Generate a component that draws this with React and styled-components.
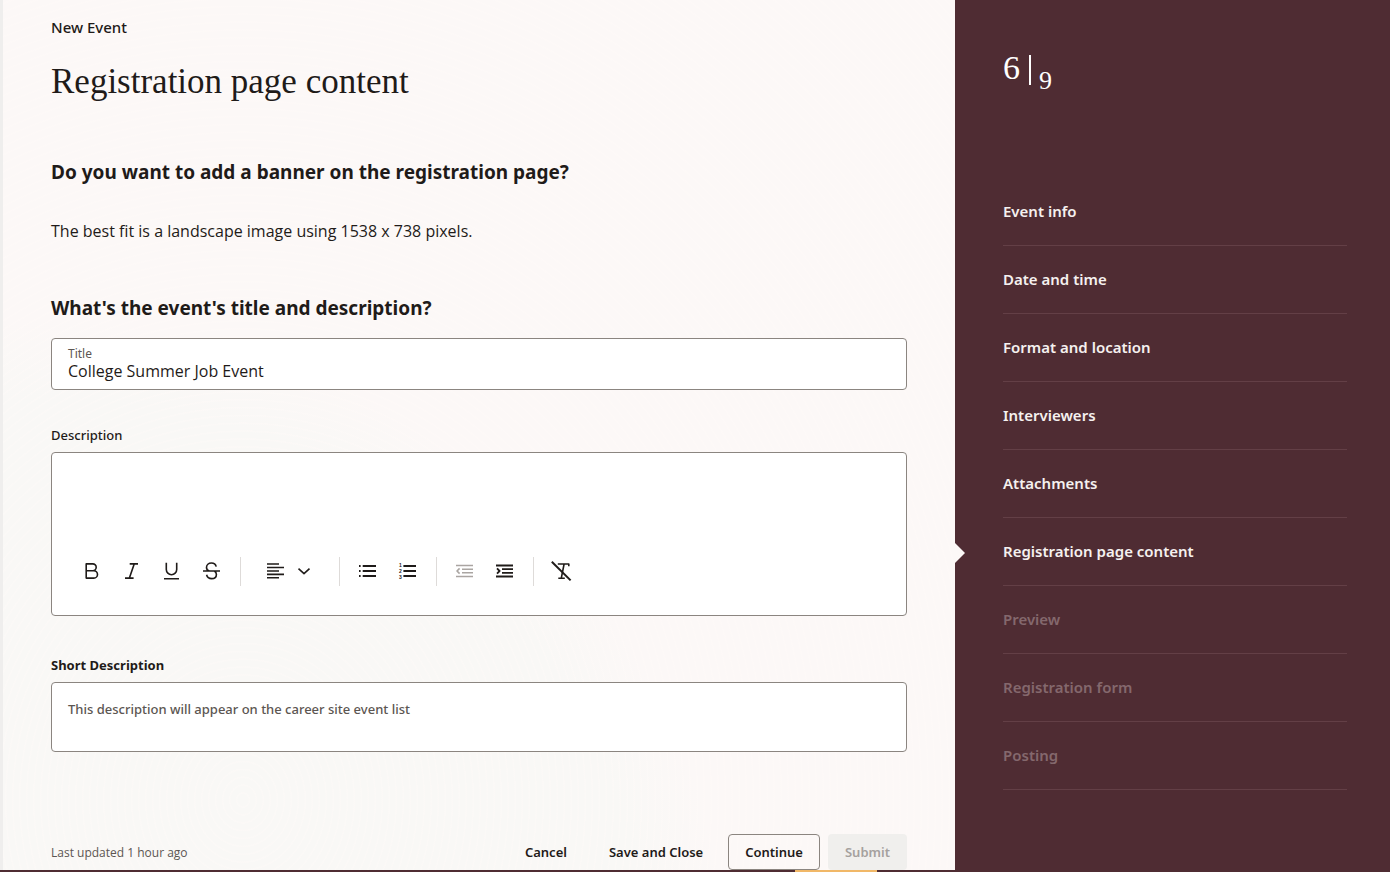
import { useState } from 'react';
import styled, { createGlobalStyle } from 'styled-components';

const steps = [
  'Event info',
  'Date and time',
  'Format and location',
  'Interviewers',
  'Attachments',
  'Registration page content',
  'Preview',
  'Registration form',
  'Posting',
];

const CURRENT = 5;

const App = () => {
  const [title, setTitle] = useState('College Summer Job Event');

  return (
    <>
      <GlobalStyle />
      <Page>
        <Columns>
          <Main>
            <EventName>New Event</EventName>
            <PageTitle>Registration page content</PageTitle>

            <SectionTitle>Do you want to add a banner on the registration page?</SectionTitle>
            <Hint>The best fit is a landscape image using 1538 x 738 pixels.</Hint>

            <SectionTitle>What's the event's title and description?</SectionTitle>
            <TitleField>
              <label htmlFor="title">Title</label>
              <input id="title" value={title} onChange={(e) => setTitle(e.target.value)} />
            </TitleField>

            <Label htmlFor="description">Description</Label>
            <Editor>
              <textarea id="description" />
              <Toolbar role="toolbar" aria-label="Formatting">
                <Tool aria-label="Bold">
                  <Icon>
                    <path d="M7.2 4.9h6.6a3.4 3.4 0 0 1 0 6.8H7.2zM7.2 11.7h7.6a3.7 3.7 0 0 1 0 7.4H7.2z" />
                  </Icon>
                </Tool>
                <Tool aria-label="Italic">
                  <Icon>
                    <path d="M10.7 4.9H19M6 19.1h8.6M15.2 4.9l-4.8 14.2" />
                  </Icon>
                </Tool>
                <Tool aria-label="Underline">
                  <Icon>
                    <path d="M7.3 3.7v6.8a5.2 5.2 0 0 0 10.4 0V3.7M5 19.7h15" />
                  </Icon>
                </Tool>
                <Tool aria-label="Strikethrough">
                  <Icon>
                    <path d="M4 12h17M17.2 7.6c-.6-2.4-2.3-3.6-4.7-3.6-3 0-5 1.9-5 4.4 0 1.7.9 2.9 2.8 3.6M7.6 15.8c.6 2.5 2.5 3.8 5 3.8 2.9 0 4.8-1.7 4.8-4.2 0-1.5-.6-2.6-2-3.4" />
                  </Icon>
                </Tool>
                <Divider />
                <AlignTool aria-label="Align">
                  <Icon>
                    <path d="M4 5h12M4 8.5h17M4 12h12M4 15.4h17M4 18.8h12" />
                  </Icon>
                  <Chevron viewBox="0 0 16 16">
                    <path d="M2.5 5.7 8 10.6l5.5-4.9" />
                  </Chevron>
                </AlignTool>
                <Divider />
                <Tool aria-label="Bulleted list">
                  <Icon>
                    <path strokeWidth="2" d="M4 7h1.6M7.7 7H21M4 12h1.6M7.7 12H21M4 17h1.6M7.7 17H21" />
                  </Icon>
                </Tool>
                <Tool aria-label="Numbered list">
                  <Icon>
                    <path strokeWidth="2" d="M8.4 7H21M8.4 12H21M8.4 17H21" />
                    <text x="4" y="8">1</text>
                    <text x="4" y="14">2</text>
                    <text x="4" y="20">3</text>
                  </Icon>
                </Tool>
                <Divider />
                <Tool aria-label="Decrease indent" disabled>
                  <Icon>
                    <path d="M4 6.5h17M10 10.2h11M10 13.8h11M4 17.5h17M7.6 9.4 5 12l2.6 2.6" />
                  </Icon>
                </Tool>
                <Tool aria-label="Increase indent">
                  <Icon>
                    <path strokeWidth="1.8" d="M4 6.5h17M10 10.2h11M10 13.8h11M4 17.5h17M5 9.4 7.6 12 5 14.6" />
                  </Icon>
                </Tool>
                <Divider />
                <Tool aria-label="Clear formatting">
                  <Icon>
                    <path d="M8.8 5h11v2.3M15.1 5l-2.8 14.2M9.3 19.2h6.5" />
                    <path strokeWidth="2" d="m2.8 2.8 18.8 18.6" />
                  </Icon>
                </Tool>
              </Toolbar>
            </Editor>

            <Label htmlFor="short" $bold>
              Short Description
            </Label>
            <ShortDescription
              id="short"
              placeholder="This description will appear on the career site event list"
            />

            <Footer>
              <span>Last updated 1 hour ago</span>
              <Button>Cancel</Button>
              <Button>Save and Close</Button>
              <Button $variant="outlined">Continue</Button>
              <Button $variant="solid" disabled>
                Submit
              </Button>
            </Footer>
          </Main>

          <Sidebar>
            <Counter>
              <strong>6</strong>
              <i />
              <span>9</span>
            </Counter>

            <Steps>
              {steps.map((step, index) => (
                <Step key={step} $current={index === CURRENT}>
                  {index > CURRENT ? <span>{step}</span> : <a href="#step">{step}</a>}
                </Step>
              ))}
            </Steps>
          </Sidebar>
        </Columns>
        <BottomBar>
          <i />
        </BottomBar>
      </Page>
    </>
  );
};

const GlobalStyle = createGlobalStyle`
  * {
    box-sizing: border-box;
  }

  body {
    margin: 0;
    background-color: #fcf8f7;
    color: #1f1b19;
    font-family: 'Noto Sans', 'Open Sans', sans-serif;
    font-size: 15px;
  }

  h1,
  h2,
  p,
  ul {
    margin: 0;
    padding: 0;
  }

  button,
  input,
  textarea {
    font-family: inherit;
    color: inherit;
  }
`;

const Page = styled.div`
  display: flex;
  flex-direction: column;
  min-height: 100vh;
`;

const Columns = styled.div`
  flex: 1;
  display: grid;
  grid-template-columns: minmax(0, 1fr) 435px;
`;

const Main = styled.main`
  display: flex;
  flex-direction: column;
  padding: 15px 48px 0;
  border-left: 3px solid #efeeed;
  /* faint contour lines over a soft round patch */
  background: repeating-radial-gradient(
      ellipse at 240px 800px,
      transparent 0 5px,
      rgba(255, 250, 248, 0.35) 6px 7px
    ),
    radial-gradient(circle at 48px 1000px, #f9f8f6 0 600px, #fcf8f7 680px);
`;

const EventName = styled.p`
  font-weight: 500;
  line-height: 24px;
`;

const PageTitle = styled.h1`
  margin: 23px 0 56px;
  font-family: Georgia, 'Liberation Serif', serif;
  font-size: 35px;
  font-weight: 400;
  line-height: 40px;
`;

const SectionTitle = styled.h2`
  margin-bottom: 16px;
  font-size: 19px;
  font-weight: 700;
  line-height: 28px;
`;

const Hint = styled.p`
  margin: 17px 0 51px;
  font-family: 'Open Sans', sans-serif;
  font-size: 16px;
  line-height: 24px;
`;

const TitleField = styled.div`
  display: flex;
  flex-direction: column;
  margin-bottom: 35px;
  padding: 8px 16px;
  border: 1px solid #8b8580;
  border-radius: 4px;
  background-color: #fff;

  label {
    font-size: 12px;
    line-height: 14px;
    color: #5c5652;
  }

  input {
    height: 20px;
    padding: 0;
    border: 0;
    outline: 0;
    background: none;
    font-family: 'Open Sans', sans-serif;
    font-size: 16px;
    line-height: 20px;
  }
`;

const Label = styled.label`
  margin-bottom: 7px;
  font-size: 13px;
  font-weight: ${({ $bold }) => ($bold ? 700 : 500)};
  line-height: 20px;
`;

const Editor = styled.div`
  margin-bottom: 39px;
  padding-bottom: 24px;
  border: 1px solid #8b8580;
  border-radius: 4px;
  background-color: #fff;

  textarea {
    display: block;
    width: 100%;
    height: 98px;
    padding: 16px;
    border: 0;
    outline: 0;
    resize: none;
    background: none;
    font-size: 15px;
  }
`;

const Toolbar = styled.div`
  display: flex;
  align-items: center;
  padding: 0 19px;
`;

const Tool = styled.button`
  display: flex;
  align-items: center;
  justify-content: center;
  width: 40px;
  height: 40px;
  padding: 0;
  border: 0;
  background: none;
  cursor: pointer;

  &:disabled {
    color: #aaa5a2;
    cursor: default;
  }
`;

const AlignTool = styled(Tool)`
  gap: 9px;
  width: 82px;
  padding-right: 4px;
`;

const IconSvg = styled.svg`
  width: 24px;
  height: 24px;
  fill: none;
  stroke: currentColor;
  stroke-width: 1.6;
  stroke-linejoin: round;

  text {
    fill: currentColor;
    stroke: none;
    font-family: 'Liberation Sans', sans-serif;
    font-size: 5px;
    font-weight: 700;
  }
`;

const Icon = ({ children }) => (
  <IconSvg viewBox="0 0 24 24" aria-hidden="true">
    {children}
  </IconSvg>
);

const Chevron = styled(IconSvg)`
  width: 16px;
  height: 16px;
`;

const Divider = styled.span`
  width: 1px;
  height: 29px;
  margin: 0 7px 0 9px;
  background-color: #dedbd9;
`;

const ShortDescription = styled.textarea`
  height: 70px;
  padding: 16px;
  border: 1px solid #8b8580;
  border-radius: 4px;
  outline: 0;
  resize: none;
  background-color: #fff;
  font-size: 13px;
  font-weight: 500;
  line-height: 20px;

  &::placeholder {
    color: #5c5652;
    opacity: 1;
  }
`;

const Footer = styled.footer`
  display: flex;
  align-items: center;
  gap: 8px;
  margin-top: auto;
  padding-top: 48px;

  > span {
    margin-right: auto;
    font-family: 'Open Sans', sans-serif;
    font-size: 12px;
    color: #5c5652;
  }
`;

const Button = styled.button`
  height: 36px;
  padding: 0 16px;
  border: 1px solid ${({ $variant }) => ($variant === 'outlined' ? '#8b8580' : 'transparent')};
  border-radius: 4px;
  background-color: ${({ $variant }) => ($variant === 'solid' ? '#f0efed' : 'transparent')};
  font-size: 13px;
  font-weight: 600;
  cursor: pointer;

  &:disabled {
    color: #a5a19e;
    cursor: default;
  }
`;

const Sidebar = styled.aside`
  padding: 50px 43px 0 48px;
  background-color: #4f2c33;
  color: #f5f1ef;
`;

const Counter = styled.div`
  display: flex;
  height: 128px;
  font-family: Georgia, 'Liberation Serif', serif;
  color: #fff;

  strong {
    font-size: 34px;
    font-weight: 400;
    line-height: 36px;
  }

  i {
    width: 2px;
    height: 30px;
    margin: 5px 8px 0 9px;
    background-color: #fff;
  }

  span {
    padding-top: 16px;
    font-size: 26px;
    line-height: 30px;
  }
`;

const Steps = styled.ul`
  list-style: none;
`;

const Step = styled.li`
  position: relative;
  padding: 21px 0 22px;
  border-bottom: 1px solid #633f46;
  font-weight: 600;
  line-height: 24px;

  a {
    color: inherit;
    text-decoration: none;
  }

  span {
    color: #84686d;
  }

  &::before {
    content: '';
    display: ${({ $current }) => ($current ? 'block' : 'none')};
    position: absolute;
    top: 25px;
    left: -48px;
    border: 10px solid transparent;
    border-left-color: #fcf8f7;
    border-right-width: 0;
  }
`;

const BottomBar = styled.div`
  height: 2px;
  background-color: #4f2c33;

  i {
    display: block;
    width: 82px;
    height: 2px;
    margin-left: calc(100% - 595px);
    background-color: #f1b868;
  }
`;

export default App;
